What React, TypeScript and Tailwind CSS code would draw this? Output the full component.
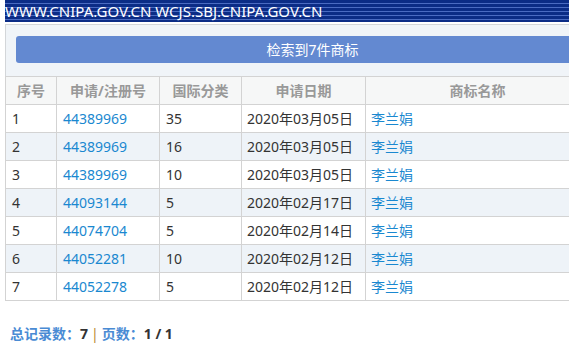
const rows = [
  { no: 1, reg: "44389969", cls: "35", date: "2020年03月05日", name: "李兰娟" },
  { no: 2, reg: "44389969", cls: "16", date: "2020年03月05日", name: "李兰娟" },
  { no: 3, reg: "44389969", cls: "10", date: "2020年03月05日", name: "李兰娟" },
  { no: 4, reg: "44093144", cls: "5", date: "2020年02月17日", name: "李兰娟" },
  { no: 5, reg: "44074704", cls: "5", date: "2020年02月14日", name: "李兰娟" },
  { no: 6, reg: "44052281", cls: "10", date: "2020年02月12日", name: "李兰娟" },
  { no: 7, reg: "44052278", cls: "5", date: "2020年02月12日", name: "李兰娟" },
];

export default function App() {
  return (
    <div className="h-[361px] w-[569px] overflow-hidden bg-white font-['Noto_Sans','Noto_Sans_CJK_SC',sans-serif] text-[14px] text-[#333]">
      <div className="ml-[5px] w-[615px]">
        {/* striped site banner */}
        <div className="flex h-[22px] items-center bg-[repeating-linear-gradient(180deg,#0b2c86_0px,#0b2c86_3px,#4a6bc2_3px,#4a6bc2_4px)] text-[15px] leading-none text-white">
          <span className="pt-[1px]">WWW.CNIPA.GOV.CN WCJS.SBJ.CNIPA.GOV.CN</span>
        </div>

        <div className="mt-[2px] border-x border-t border-[#d3d6d9] bg-[#f0f4f8] px-[10px] pb-[13px] pt-[11px]">
          <div className="flex h-[27px] items-center justify-center rounded-[3px] bg-[#6389d1] text-white">
            检索到7件商标
          </div>
        </div>

        <table className="w-full table-fixed border-collapse">
          <colgroup>
            <col className="w-[51px]" />
            <col className="w-[103px]" />
            <col className="w-[82px]" />
            <col className="w-[124px]" />
            <col />
          </colgroup>
          <thead>
            <tr className="h-[28px] bg-[#f6f7f7] font-bold text-[#999]">
              <th className="border border-[#d3d3d3] font-bold">序号</th>
              <th className="border border-[#d3d3d3] font-bold">申请/注册号</th>
              <th className="border border-[#d3d3d3] font-bold">国际分类</th>
              <th className="border border-[#d3d3d3] font-bold">申请日期</th>
              <th className="border border-[#d3d3d3] pr-[30px] font-bold">商标名称</th>
            </tr>
          </thead>
          <tbody>
            {rows.map((r, i) => (
              <tr key={r.no} className={`h-[28px] ${i % 2 === 1 ? "bg-[#eef3f8]" : "bg-white"}`}>
                <td className="border border-[#d3d3d3] pl-[6px]">{r.no}</td>
                <td className="border border-[#d3d3d3] pl-[6px] text-[#1a88d0]">{r.reg}</td>
                <td className="border border-[#d3d3d3] pl-[6px]">{r.cls}</td>
                <td className="border border-[#d3d3d3] pl-[5px]">{r.date}</td>
                <td className="border border-[#d3d3d3] pl-[5px] text-[#1a88d0]">{r.name}</td>
              </tr>
            ))}
          </tbody>
        </table>

        <div className="mt-[22px] pl-[5px] font-bold">
          <span className="text-[#4a8bd4]">总记录数：</span>
          <span className="text-[#333]">7</span>
          <span className="mx-[3px] font-normal text-[#b8862e]">|</span>
          <span className="text-[#4a8bd4]">页数：</span>
          <span className="text-[#333]">1 / 1</span>
        </div>
      </div>
    </div>
  );
}
